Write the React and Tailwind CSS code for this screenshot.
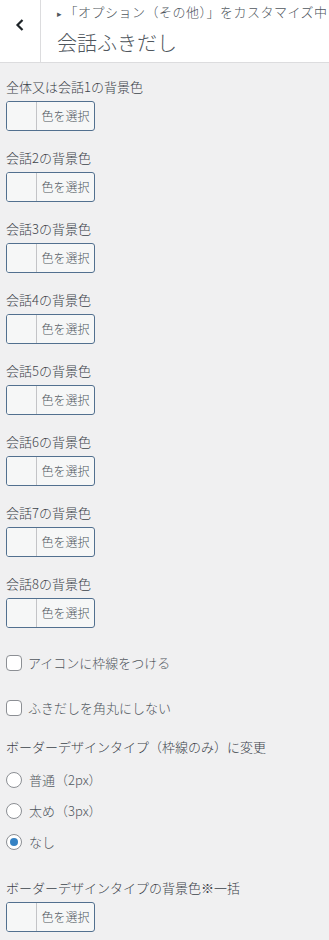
const font = { fontFamily: '"Noto Sans CJK JP", "Noto Sans", sans-serif' };

const ColorControl = ({ label, className = '' }) => (
    <div className={className}>
        <div className="h-5 leading-5 text-[13px] font-light text-[#3c434a]">{label}</div>
        <div className="mt-1 flex h-[30px] w-[89px] overflow-hidden rounded-[3px] border border-[#52708f] bg-[#f6f7f7]">
            <div className="w-[30px] shrink-0 border-r border-[#c3c4c7] bg-[#f6f7f7]" />
            <div className="flex flex-1 items-center justify-center text-[12px] font-light text-[#50575e]">
                色を選択
            </div>
        </div>
    </div>
);

const Checkbox = ({ label, className = '' }) => (
    <div className={`flex h-5 items-center ${className}`}>
        <span className="h-4 w-4 shrink-0 rounded-[4px] border border-[#8c8f94] bg-white" />
        <span className="ml-[6px] text-[13px] font-light text-[#50575e]">{label}</span>
    </div>
);

const Radio = ({ label, checked, className = '' }) => (
    <div className={`flex h-5 items-center ${className}`}>
        <span className="flex h-4 w-4 shrink-0 items-center justify-center rounded-full border border-[#8c8f94] bg-white">
            {checked && <span className="h-2 w-2 rounded-full bg-[#3582c4]" />}
        </span>
        <span className="ml-[7px] text-[13px] font-light text-[#50575e]">{label}</span>
    </div>
);

const App = () => {
    const talks = [2, 3, 4, 5, 6, 7, 8];

    return (
        <div className="min-h-[940px] w-[329px] bg-[#f0f0f1]" style={font}>
            <div className="flex h-[63px] border-b border-[#dcdcde] bg-white">
                <div className="flex w-[41px] shrink-0 justify-center border-r border-[#dcdcde] pt-[18px]">
                    <svg width="10" height="14" viewBox="0 0 10 14">
                        <path d="M7.5 2 L2.5 7 L7.5 12" fill="none" stroke="#1d2327" strokeWidth="2.2" />
                    </svg>
                </div>
                <div className="min-w-0 flex-1 pl-[16px]">
                    <div className="mt-[4px] whitespace-nowrap text-[13px] font-light leading-[16px] tracking-[0.5px] text-[#50575e]">
                        <span className="mr-[2px] text-[9px]">▸</span>「オプション（その他）」をカスタマイズ中
                    </div>
                    <div className="mt-[8px] text-[20px] font-light leading-[26px] text-[#50575e]">会話ふきだし</div>
                </div>
            </div>

            <div className="px-[6px] pt-[14px]">
                <ColorControl label="全体又は会話1の背景色" className="mb-[17px]" />
                {talks.map((n) => (
                    <ColorControl
                        key={n}
                        label={`会話${n}の背景色`}
                        className={n === 8 ? '' : 'mb-[17px]'}
                    />
                ))}

                <Checkbox label="アイコンに枠線をつける" className="mt-[25px]" />
                <Checkbox label="ふきだしを角丸にしない" className="mt-[25px]" />

                <div className="mt-[19px] h-5 leading-5 text-[13px] font-light text-[#3c434a]">
                    ボーダーデザインタイプ（枠線のみ）に変更
                </div>
                <Radio label="普通（2px）" className="mt-[13px]" />
                <Radio label="太め（3px）" className="mt-[11px]" />
                <Radio label="なし" checked className="mt-[11px]" />

                <ColorControl label="ボーダーデザインタイプの背景色※一括" className="mt-[26px]" />
            </div>
        </div>
    );
};

export default App;
